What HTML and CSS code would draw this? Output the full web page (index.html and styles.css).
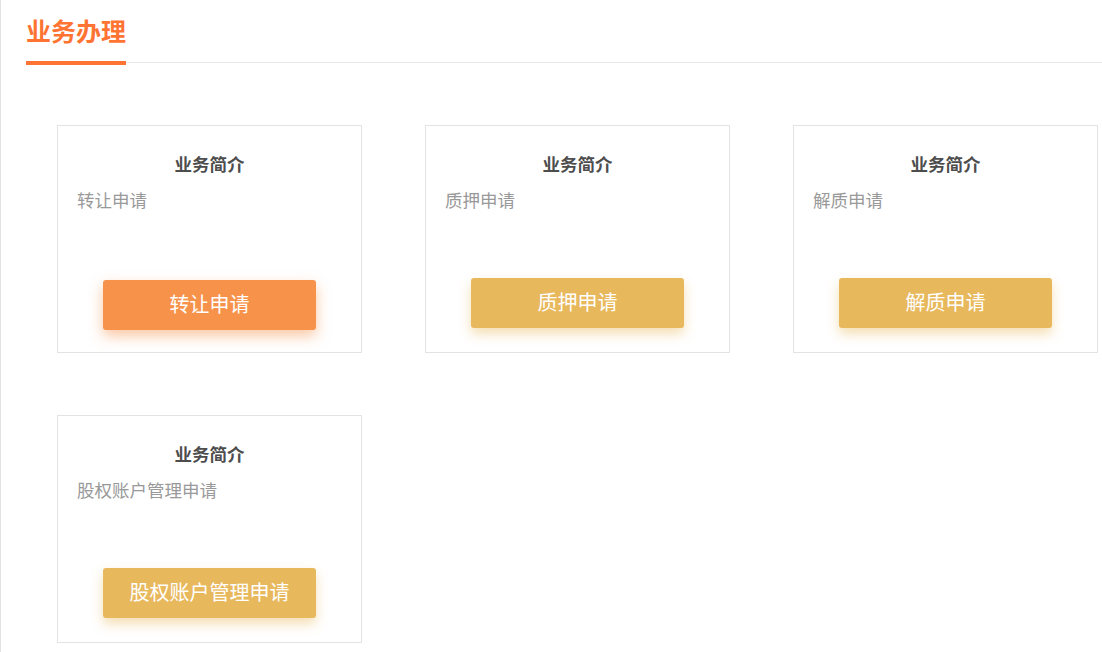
FILE: index.html
```html
<!DOCTYPE html>
<html lang="zh-CN">
  <head>
    <meta charset="UTF-8">
    <title>业务办理</title>
    <link rel="stylesheet" href="styles.css">
  </head>
  <body>
    <div class="page">
      <div class="tabs">
        <div class="tab-item tab-active">业务办理</div>
      </div>
      <div class="biz-list">
        <div class="biz-card">
          <p class="biz-card__title">业务简介</p>
          <p class="biz-card__desc">转让申请</p>
          <button class="biz-card__btn btn-hover">转让申请</button>
        </div>
        <div class="biz-card">
          <p class="biz-card__title">业务简介</p>
          <p class="biz-card__desc">质押申请</p>
          <button class="biz-card__btn">质押申请</button>
        </div>
        <div class="biz-card">
          <p class="biz-card__title">业务简介</p>
          <p class="biz-card__desc">解质申请</p>
          <button class="biz-card__btn">解质申请</button>
        </div>
        <div class="biz-card">
          <p class="biz-card__title">业务简介</p>
          <p class="biz-card__desc">股权账户管理申请</p>
          <button class="biz-card__btn">股权账户管理申请</button>
        </div>
      </div>
    </div>
  </body>
</html>
```

FILE: styles.css
```css
* {
  margin: 0;
  padding: 0;
  box-sizing: border-box;
}
body {
  background: #fff;
  font-family: "Noto Sans CJK SC", "Noto Sans", sans-serif;
  color: #333;
}
.page {
  min-height: 652px;
  border-left: 1px solid #e3e3e3;
  padding-left: 25px;
}
.tabs {
  display: flex;
  border-bottom: 1px solid #e6e6e6;
  padding-top: 12px;
}
.tab-item {
  width: 100px;
  font-size: 25px;
  line-height: 36px;
  font-weight: bold;
  padding-bottom: 13px;
  margin-bottom: -3px;
  white-space: nowrap;
}
.tab-active {
  color: #ff7433;
  border-bottom: 4px solid #ff7433;
}
.biz-list {
  display: grid;
  grid-template-columns: 305px 305px 305px;
  grid-auto-rows: 228px;
  column-gap: 63px;
  row-gap: 62px;
  margin-top: 62px;
  padding-left: 31px;
}
.biz-card {
  display: flex;
  flex-direction: column;
  border: 1px solid #e3e3e3;
  padding: 26px 19px 0;
}
.biz-card__title {
  text-align: center;
  font-size: 17.5px;
  line-height: 24px;
  font-weight: bold;
  color: #4d4d4d;
}
.biz-card__desc {
  margin-top: 12px;
  font-size: 17.5px;
  line-height: 24px;
  color: #999;
}
.biz-card__btn {
  align-self: center;
  width: 213px;
  height: 50px;
  padding-bottom: 3px;
  margin-top: auto;
  margin-bottom: 24px;
  border: none;
  border-radius: 3px;
  background: #e8b85c;
  color: #fff;
  font-family: inherit;
  font-size: 20px;
  box-shadow: 0 6px 12px rgba(232, 184, 92, 0.45);
  cursor: pointer;
}
.btn-hover {
  margin-bottom: 22px;
  background: #f7924a;
  box-shadow: 0 6px 14px rgba(247, 146, 74, 0.5);
}
```
